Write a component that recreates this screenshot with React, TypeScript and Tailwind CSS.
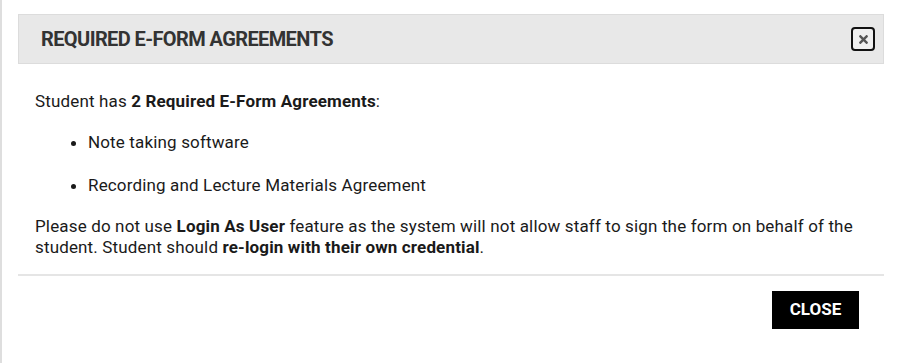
import { FaTimes } from 'react-icons/fa';

export default function App() {
  return (
    <div className="h-[363px] w-[900px] border-l-2 border-[#dedede] bg-white font-['Roboto',sans-serif] text-[#1a1a1a]">
      <div className="pl-[16px] pr-[16px] pt-[14px]">
        <div className="flex h-[50px] items-center justify-between border border-[#dcdcdc] bg-[#e8e8e8] pl-[22px] pr-[8px]">
          <h2 className="text-[20px] font-bold tracking-[-0.6px] text-[#333]">
            REQUIRED E-FORM AGREEMENTS
          </h2>
          <button className="flex h-[24px] w-[24px] items-center justify-center rounded-[4px] border-2 border-[#111] bg-[#efefef] text-[#555]">
            <FaTimes className="h-[13px] w-[13px]" />
          </button>
        </div>

        <div className="px-[17px] text-[17px] leading-[21px] tracking-[0.15px]">
          <p className="mt-[27px]">
            Student has <b className="font-bold">2 Required E-Form Agreements</b>:
          </p>
          <ul className="mt-[20px] list-disc space-y-[22px] pl-[53px]">
            <li>Note taking software</li>
            <li>Recording and Lecture Materials Agreement</li>
          </ul>
          <p className="mt-[20px]">
            Please do not use <b className="font-bold">Login As User</b> feature as the system will not allow staff to sign the form on behalf of the student. Student should{' '}
            <b className="font-bold">re-login with their own credential</b>.
          </p>
        </div>

        <div className="mt-[16px] h-[2px] bg-[#e5e5e5]" />

        <div className="flex justify-end pr-[25px] pt-[15px]">
          <button className="h-[38px] w-[87px] bg-black text-[17px] font-bold text-white">
            CLOSE
          </button>
        </div>
      </div>
    </div>
  );
}
